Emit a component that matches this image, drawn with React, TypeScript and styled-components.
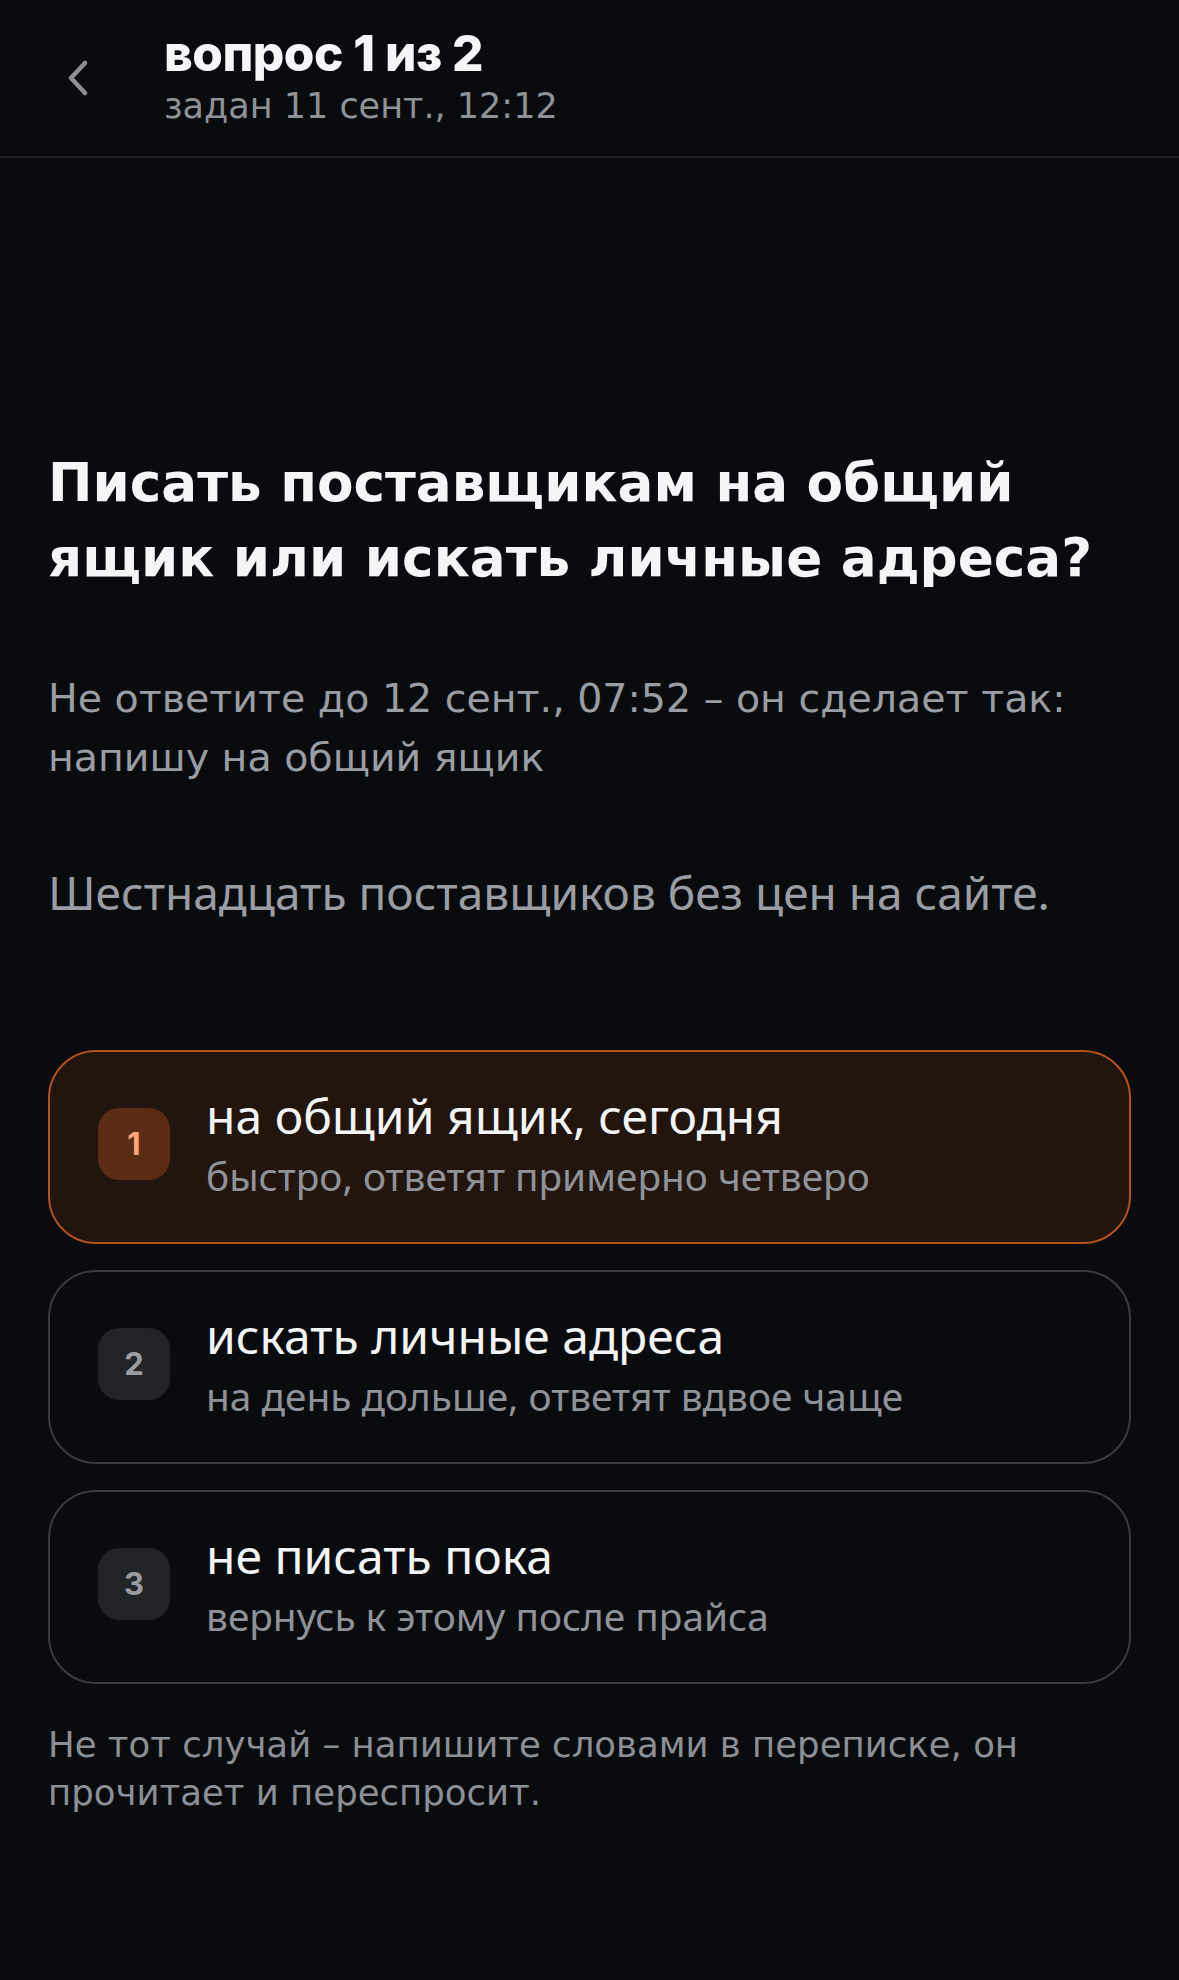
import React from "react";
import styled, { createGlobalStyle } from "styled-components";

const GlobalStyle = createGlobalStyle`
  html, body {
    margin: 0;
    padding: 0;
    background: #0a0b0e;
  }
  body {
    font-family: "DejaVu Sans", "Noto Sans", sans-serif;
    -webkit-font-smoothing: antialiased;
  }
  * { box-sizing: border-box; }
`;

const Page = styled.div`
  min-height: 1980px;
  background: #0a0b0e;
  display: flex;
  flex-direction: column;
`;

const Header = styled.header`
  height: 158px;
  display: flex;
  align-items: center;
  padding-left: 48px;
  border-bottom: 2px solid #1d1f23;
`;

const BackButton = styled.button`
  width: 60px;
  height: 60px;
  display: flex;
  align-items: center;
  justify-content: center;
  background: none;
  border: none;
  padding: 0;
  margin-right: 56px;
  color: #8e9095;
  cursor: pointer;
`;

const HeaderText = styled.div`
  display: flex;
  flex-direction: column;
`;

const HeaderTitle = styled.div`
  font-family: "Inter", "Liberation Sans", sans-serif;
  font-weight: 800;
  font-size: 49.5px;
  line-height: 50px;
  letter-spacing: -0.5px;
  color: #f5f6f8;
`;

const HeaderSub = styled.div`
  margin-top: 6px;
  font-size: 35px;
  line-height: 44px;
  color: #8f9297;
`;

const Main = styled.main`
  display: flex;
  flex-direction: column;
  padding: 288px 48px 0;
`;

const Question = styled.h1`
  margin: 0;
  font-family: "DejaVu Sans", sans-serif;
  font-weight: 700;
  font-size: 53.2px;
  line-height: 75px;
  color: #f4f5f7;
`;

const Note = styled.p<{ $size: number; $lh: number; $gap: number; $alt?: boolean }>`
  margin: ${(p) => p.$gap}px 0 0;
  font-family: ${(p) => (p.$alt ? '"Noto Sans", sans-serif' : '"DejaVu Sans", sans-serif')};
  font-size: ${(p) => p.$size}px;
  line-height: ${(p) => p.$lh}px;
  color: #9a9da4;
`;

const Options = styled.div`
  margin-top: 124px;
  display: flex;
  flex-direction: column;
  gap: 26px;
`;

const OptionCard = styled.div<{ $active?: boolean }>`
  display: flex;
  align-items: center;
  gap: 36px;
  padding: 33px 48px 38px;
  border-radius: 48px;
  border: 2px solid ${(p) => (p.$active ? "#b4521b" : "#393b40")};
  background: ${(p) => (p.$active ? "#22150e" : "transparent")};
`;

const Badge = styled.div<{ $active?: boolean }>`
  flex: none;
  width: 72px;
  height: 72px;
  margin-top: -2px;
  border-radius: 21px;
  display: flex;
  align-items: center;
  justify-content: center;
  background: ${(p) => (p.$active ? "#5a2c14" : "#222326")};
  color: ${(p) => (p.$active ? "#ffa67a" : "#9a9ca1")};
  font-family: "Inter", "Liberation Sans", sans-serif;
  font-weight: 700;
  font-size: 31px;
`;

const OptionText = styled.div`
  display: flex;
  flex-direction: column;
  font-family: "Noto Sans", sans-serif;
`;

const OptionTitle = styled.div`
  font-size: 48px;
  line-height: 62px;
  color: #f3f4f6;
`;

const OptionSub = styled.div`
  margin-top: 2px;
  font-size: 38.8px;
  line-height: 55px;
  color: #8f9298;
`;

const Footer = styled.p`
  margin: 37px 0 0;
  font-size: 35.5px;
  line-height: 48px;
  color: #8c8f95;
`;

const options = [
  { n: 1, title: "на общий ящик, сегодня", sub: "быстро, ответят примерно четверо", active: true },
  { n: 2, title: "искать личные адреса", sub: "на день дольше, ответят вдвое чаще" },
  { n: 3, title: "не писать пока", sub: "вернусь к этому после прайса" },
];

export default function App() {
  return (
    <Page>
      <GlobalStyle />
      <Header>
        <BackButton aria-label="назад">
          <svg width="22" height="38" viewBox="0 0 22 38" fill="none">
            <path
              d="M18 4 L4 19 L18 34"
              stroke="currentColor"
              strokeWidth="4.5"
              strokeLinecap="round"
              strokeLinejoin="round"
            />
          </svg>
        </BackButton>
        <HeaderText>
          <HeaderTitle>вопрос 1 из 2</HeaderTitle>
          <HeaderSub>задан 11 сент., 12:12</HeaderSub>
        </HeaderText>
      </Header>
      <Main>
        <Question>Писать поставщикам на общий ящик или искать личные адреса?</Question>
        <Note $size={39.5} $lh={59} $gap={73}>
          Не ответите до 12 сент., 07:52 – он сделает так: напишу на общий ящик
        </Note>
        <Note $size={46} $lh={67} $gap={72} $alt>
          Шестнадцать поставщиков без цен на сайте.
        </Note>
        <Options>
          {options.map((o) => (
            <OptionCard key={o.n} $active={o.active}>
              <Badge $active={o.active}>{o.n}</Badge>
              <OptionText>
                <OptionTitle>{o.title}</OptionTitle>
                <OptionSub>{o.sub}</OptionSub>
              </OptionText>
            </OptionCard>
          ))}
        </Options>
        <Footer>
          Не тот случай – напишите словами в переписке, он прочитает и переспросит.
        </Footer>
      </Main>
    </Page>
  );
}
